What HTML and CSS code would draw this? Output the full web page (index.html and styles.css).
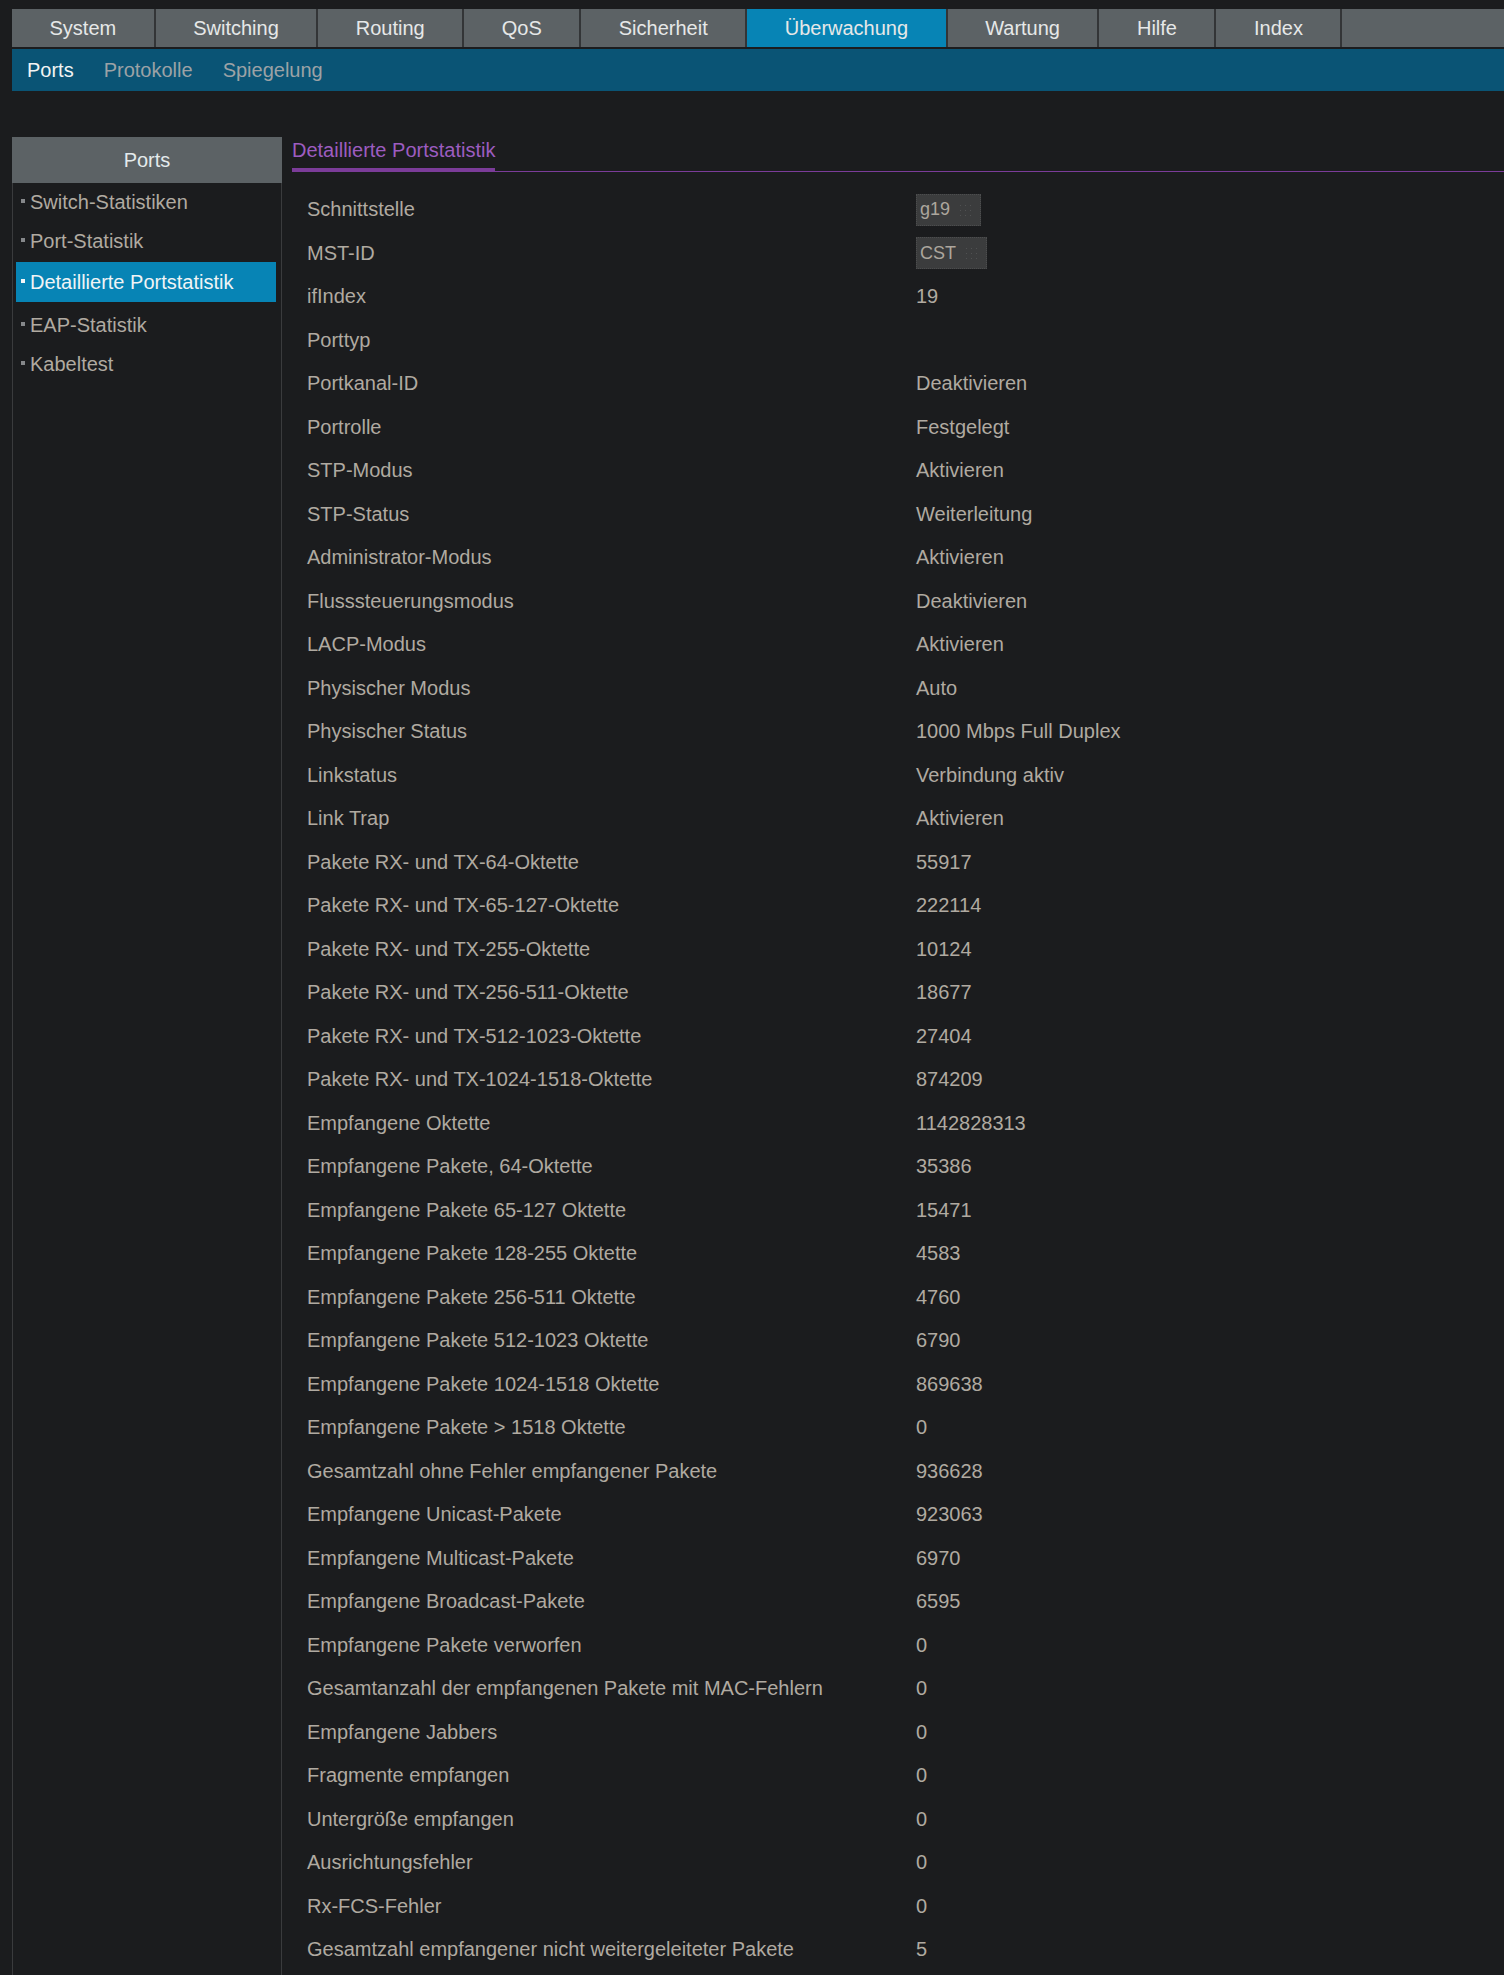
FILE: index.html
```html
<!DOCTYPE html>
<html lang="de">
<head>
<meta charset="utf-8">
<title>Detaillierte Portstatistik</title>
<link rel="stylesheet" href="styles.css">
</head>
<body>
<nav class="topnav">
  <a class="tab">System</a>
  <a class="tab">Switching</a>
  <a class="tab">Routing</a>
  <a class="tab">QoS</a>
  <a class="tab">Sicherheit</a>
  <a class="tab active">Überwachung</a>
  <a class="tab">Wartung</a>
  <a class="tab">Hilfe</a>
  <a class="tab">Index</a>
</nav>
<nav class="subnav">
  <a class="sub active">Ports</a>
  <a class="sub">Protokolle</a>
  <a class="sub">Spiegelung</a>
</nav>
<div class="main">
  <aside class="sidebar">
    <div class="side-head">Ports</div>
    <ul class="side-list">
      <li class="side-item">Switch-Statistiken</li>
      <li class="side-item">Port-Statistik</li>
      <li class="side-item active">Detaillierte Portstatistik</li>
      <li class="side-item">EAP-Statistik</li>
      <li class="side-item">Kabeltest</li>
    </ul>
  </aside>
  <section class="content">
    <div class="tabhead"><span class="tabtitle">Detaillierte Portstatistik</span></div>
    <div class="rows">
      <div class="row"><span class="label">Schnittstelle</span><span class="value"><span class="selbox">g19<span class="arrow"></span></span></span></div>
      <div class="row"><span class="label">MST-ID</span><span class="value"><span class="selbox">CST<span class="arrow"></span></span></span></div>
      <div class="row"><span class="label">ifIndex</span><span class="value">19</span></div>
      <div class="row"><span class="label">Porttyp</span><span class="value"></span></div>
      <div class="row"><span class="label">Portkanal-ID</span><span class="value">Deaktivieren</span></div>
      <div class="row"><span class="label">Portrolle</span><span class="value">Festgelegt</span></div>
      <div class="row"><span class="label">STP-Modus</span><span class="value">Aktivieren</span></div>
      <div class="row"><span class="label">STP-Status</span><span class="value">Weiterleitung</span></div>
      <div class="row"><span class="label">Administrator-Modus</span><span class="value">Aktivieren</span></div>
      <div class="row"><span class="label">Flusssteuerungsmodus</span><span class="value">Deaktivieren</span></div>
      <div class="row"><span class="label">LACP-Modus</span><span class="value">Aktivieren</span></div>
      <div class="row"><span class="label">Physischer Modus</span><span class="value">Auto</span></div>
      <div class="row"><span class="label">Physischer Status</span><span class="value">1000 Mbps Full Duplex</span></div>
      <div class="row"><span class="label">Linkstatus</span><span class="value">Verbindung aktiv</span></div>
      <div class="row"><span class="label">Link Trap</span><span class="value">Aktivieren</span></div>
      <div class="row"><span class="label">Pakete RX- und TX-64-Oktette</span><span class="value">55917</span></div>
      <div class="row"><span class="label">Pakete RX- und TX-65-127-Oktette</span><span class="value">222114</span></div>
      <div class="row"><span class="label">Pakete RX- und TX-255-Oktette</span><span class="value">10124</span></div>
      <div class="row"><span class="label">Pakete RX- und TX-256-511-Oktette</span><span class="value">18677</span></div>
      <div class="row"><span class="label">Pakete RX- und TX-512-1023-Oktette</span><span class="value">27404</span></div>
      <div class="row"><span class="label">Pakete RX- und TX-1024-1518-Oktette</span><span class="value">874209</span></div>
      <div class="row"><span class="label">Empfangene Oktette</span><span class="value">1142828313</span></div>
      <div class="row"><span class="label">Empfangene Pakete, 64-Oktette</span><span class="value">35386</span></div>
      <div class="row"><span class="label">Empfangene Pakete 65-127 Oktette</span><span class="value">15471</span></div>
      <div class="row"><span class="label">Empfangene Pakete 128-255 Oktette</span><span class="value">4583</span></div>
      <div class="row"><span class="label">Empfangene Pakete 256-511 Oktette</span><span class="value">4760</span></div>
      <div class="row"><span class="label">Empfangene Pakete 512-1023 Oktette</span><span class="value">6790</span></div>
      <div class="row"><span class="label">Empfangene Pakete 1024-1518 Oktette</span><span class="value">869638</span></div>
      <div class="row"><span class="label">Empfangene Pakete &gt; 1518 Oktette</span><span class="value">0</span></div>
      <div class="row"><span class="label">Gesamtzahl ohne Fehler empfangener Pakete</span><span class="value">936628</span></div>
      <div class="row"><span class="label">Empfangene Unicast-Pakete</span><span class="value">923063</span></div>
      <div class="row"><span class="label">Empfangene Multicast-Pakete</span><span class="value">6970</span></div>
      <div class="row"><span class="label">Empfangene Broadcast-Pakete</span><span class="value">6595</span></div>
      <div class="row"><span class="label">Empfangene Pakete verworfen</span><span class="value">0</span></div>
      <div class="row"><span class="label">Gesamtanzahl der empfangenen Pakete mit MAC-Fehlern</span><span class="value">0</span></div>
      <div class="row"><span class="label">Empfangene Jabbers</span><span class="value">0</span></div>
      <div class="row"><span class="label">Fragmente empfangen</span><span class="value">0</span></div>
      <div class="row"><span class="label">Untergröße empfangen</span><span class="value">0</span></div>
      <div class="row"><span class="label">Ausrichtungsfehler</span><span class="value">0</span></div>
      <div class="row"><span class="label">Rx-FCS-Fehler</span><span class="value">0</span></div>
      <div class="row"><span class="label">Gesamtzahl empfangener nicht weitergeleiteter Pakete</span><span class="value">5</span></div>
    </div>
  </section>
</div>
</body>
</html>
```

FILE: styles.css
```css
html, body {
  margin: 0;
  padding: 0;
  background: #1b1c1e;
}
body {
  font-family: "Liberation Sans", Arial, sans-serif;
  font-size: 20px;
  color: #b0aaa1;
}
a { text-decoration: none; cursor: default; }

.topnav {
  display: flex;
  margin: 9px 0 0 12px;
  height: 38px;
  background: #5c6265;
}
.tab {
  padding: 0 37.5px;
  line-height: 38px;
  color: #e6e8e8;
  border-right: 2px solid #333537;
  white-space: nowrap;
}
.tab.active {
  background: #0784b5;
}

.subnav {
  display: flex;
  align-items: center;
  margin: 2px 0 0 12px;
  height: 42px;
  background: #0a5475;
}
.sub {
  padding: 0 15px;
  color: #9ca2a6;
  line-height: 42px;
}
.sub.active { color: #f2f4f4; }

.main {
  display: flex;
  margin: 46px 0 0 12px;
}

.sidebar {
  width: 268px;
  flex: none;
  border-left: 1px solid #3a3b3d;
  border-right: 1px solid #3a3b3d;
}
.side-head {
  margin: 0 -1px 0 -1px;
  height: 46px;
  line-height: 46px;
  text-align: center;
  background: #5c6265;
  color: #e4eaec;
}
.side-list {
  list-style: none;
  margin: 0;
  padding: 0;
}
.side-item {
  display: flex;
  align-items: center;
  height: 39px;
  padding-left: 8px;
  color: #b0aaa1;
  white-space: nowrap;
}
.side-item::before {
  content: "";
  width: 4px;
  height: 4px;
  margin-right: 5px;
  margin-top: -3px;
  background: #85878a;
}
.side-item.active {
  height: 40px;
  margin: 1px 5px 4px 3px;
  padding-left: 5px;
  background: #0784b5;
  color: #f0f4f6;
}
.side-item.active::before { background: #f4f6f8; }

.content {
  flex: 1;
  min-width: 0;
  padding: 0 0 8px 10px;
}
.tabhead {
  height: 34px;
  border-bottom: 1px solid #7b3c99;
}
.tabtitle {
  display: inline-block;
  line-height: 26px;
  padding-bottom: 5px;
  border-bottom: 4px solid #7b3c99;
  color: #9d5cc0;
}
.rows {
  margin-top: 16px;
}
.row {
  display: flex;
  align-items: center;
  height: 43.5px;
}
.label {
  width: 609px;
  flex: none;
  padding-left: 15px;
  white-space: nowrap;
}
.value {
  white-space: nowrap;
}
.selbox {
  position: relative;
  display: inline-flex;
  align-items: center;
  box-sizing: border-box;
  height: 32px;
  padding: 0 30px 0 3px;
  font-size: 18px;
  background: #3b3c3d;
  border: 1px dotted #4c4d4e;
  color: #aca69d;
}
.arrow {
  position: absolute;
  right: 6px;
  top: 8px;
  width: 16px;
  height: 14px;
  background-image: radial-gradient(circle, #505152 0.8px, transparent 1px);
  background-size: 5px 5px;
}
```
